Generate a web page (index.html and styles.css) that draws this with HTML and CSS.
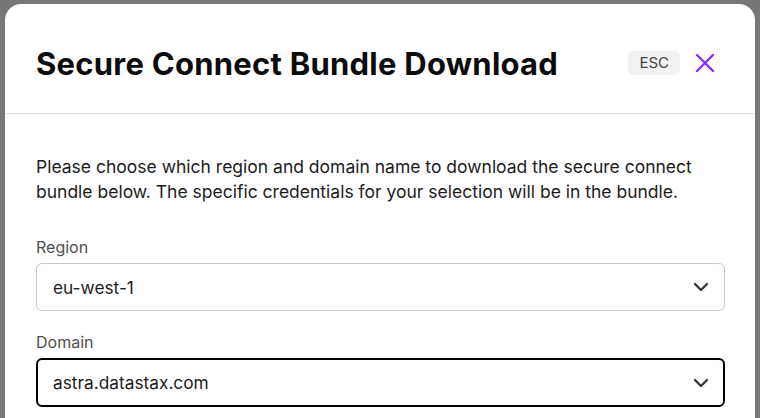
FILE: index.html
```html
<!DOCTYPE html>
<html lang="en">
    <head>
        <meta charset="UTF-8" />
        <meta name="viewport" content="width=device-width, initial-scale=1.0" />
        <title>Secure Connect Bundle Download</title>
        <link rel="stylesheet" href="styles.css">
    </head>
    <body>
        <!-- 모달 박스 -->
        <div class="modal">
            <header class="mhead">
                <h1>Secure Connect Bundle Download</h1>
                <div class="tools">
                    <span class="esc">ESC</span>
                    <a href="#" class="close">
                        <svg width="20" height="20" viewBox="0 0 20 20">
                            <path d="M2 2L18 18M18 2L2 18" stroke="#8a2ef2" stroke-width="2.4" stroke-linecap="round" />
                        </svg>
                    </a>
                </div>
            </header>
            <section class="mbody">
                <p class="desc">Please choose which region and domain name to download the secure connect bundle below. The specific credentials for your selection will be in the bundle.</p>

                <div class="field">
                    <label>Region</label>
                    <div class="sel">
                        <span>eu-west-1</span>
                        <svg width="16" height="10" viewBox="0 0 16 10">
                            <path d="M2 2L8 8L14 2" fill="none" stroke="#3a3a3a" stroke-width="2.4" stroke-linecap="round" stroke-linejoin="round" />
                        </svg>
                    </div>
                </div>

                <div class="field">
                    <label>Domain</label>
                    <div class="sel on">
                        <span>astra.datastax.com</span>
                        <svg width="16" height="10" viewBox="0 0 16 10">
                            <path d="M2 2L8 8L14 2" fill="none" stroke="#3a3a3a" stroke-width="2.4" stroke-linecap="round" stroke-linejoin="round" />
                        </svg>
                    </div>
                </div>
            </section>
        </div>
    </body>
</html>
```

FILE: styles.css
```css
html,
body {
    margin: 0px;
    padding: 0px;
    width: 100%;
    height: 100%;
}

body {
    background: #777777;
    overflow: hidden;
    font-family: Inter, "Noto Sans", sans-serif;
}

/* 모달 */
.modal {
    width: 750px;
    height: 520px;
    margin: 4px 0 0 5px;
    background: #ffffff;
    border-radius: 16px;
}

.mhead {
    display: flex;
    align-items: center;
    justify-content: space-between;
    height: 110px;
    padding: 9px 40px 0 31px;
    border-bottom: 1px solid #e4e4e4;
    box-sizing: border-box;
}

.mhead h1 {
    margin: 0;
    font-size: 31px;
    font-weight: 700;
    color: #0b0b0b;
    letter-spacing: 0.25px;
}

.tools {
    display: flex;
    align-items: center;
    gap: 15px;
}

.esc {
    display: block;
    padding: 4px 11px;
    background: #f2f2f2;
    border-radius: 6px;
    font-size: 15px;
    line-height: 16px;
    color: #444444;
}

.close {
    display: block;
    line-height: 0;
}

/* 본문 */
.mbody {
    padding: 40px 30px 0 31px;
}

.desc {
    margin: 0 0 33px;
    font-size: 17.5px;
    line-height: 25px;
    color: #1c1c1c;
}

.field {
    display: flex;
    flex-direction: column;
    gap: 6px;
    margin-bottom: 21px;
}

.field label {
    font-size: 16px;
    line-height: 20px;
    color: #4e4e4e;
}

.sel {
    display: flex;
    align-items: center;
    justify-content: space-between;
    height: 48px;
    padding: 0 15px 0 16px;
    border: 1px solid #c9c9c9;
    border-radius: 6px;
    box-sizing: border-box;
    font-size: 17.3px;
    color: #1c1c1c;
}

/* 선택된 박스 */
.sel.on {
    height: 49px;
    border: 2px solid #000000;
    padding: 0 14px 0 15px;
}
```
